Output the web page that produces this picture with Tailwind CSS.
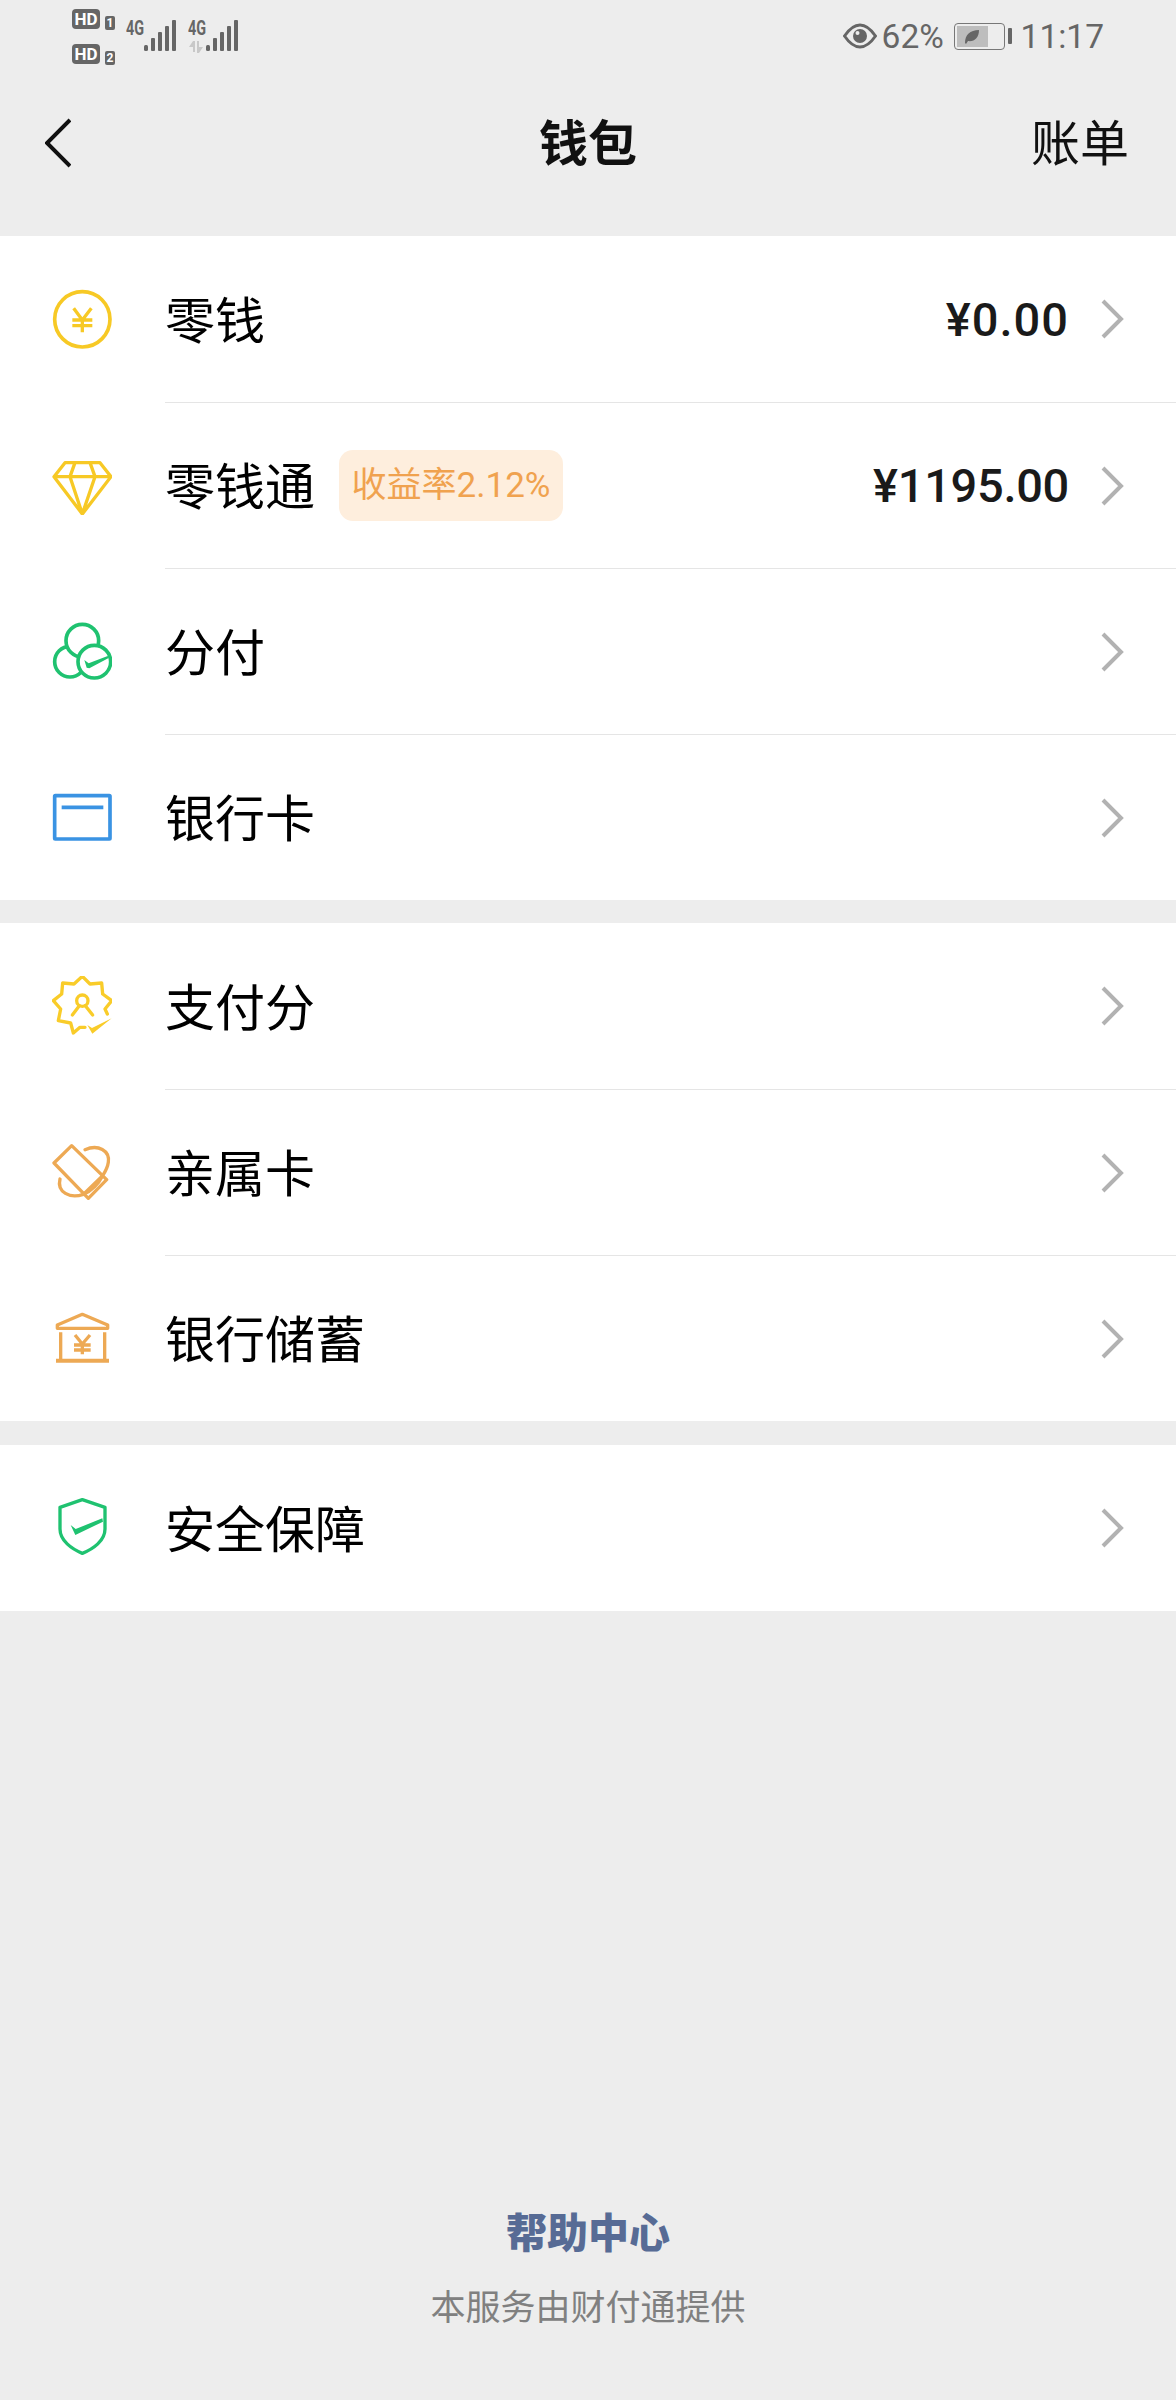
<!DOCTYPE html>
<html lang="zh-CN">
<head>
    <meta charset="UTF-8">
    <meta name="viewport" content="width=device-width, initial-scale=1.0">
    <title>钱包</title>
    <script src="https://cdn.jsdelivr.net/npm/@tailwindcss/browser@4"></script>
</head>
<body class="bg-[#ededed] font-[family-name:Roboto,'Noto_Sans_CJK_SC',sans-serif]">
<div class="w-[1176px] h-[2400px] flex flex-col">

    <!-- status bar + title -->
    <header class="h-[236px] shrink-0">
        <div class="h-[72px] flex items-start justify-between pl-[72px] pr-[72px] text-[#666]">
            <div class="flex items-start pt-[9px]">
                <div class="w-[44px] flex flex-col gap-[14px]">
                    <div class="flex items-start gap-[5px]">
                        <span class="w-[28px] h-[20px] rounded-[4px] bg-[#666] text-white text-[17px] leading-[20px] font-bold text-center">HD</span>
                        <span class="mt-[7px] w-[10px] h-[14px] rounded-[2px] bg-[#666] text-white text-[12px] leading-[14px] font-bold text-center">1</span>
                    </div>
                    <div class="flex items-start gap-[5px]">
                        <span class="w-[28px] h-[20px] rounded-[4px] bg-[#666] text-white text-[17px] leading-[20px] font-bold text-center">HD</span>
                        <span class="mt-[7px] w-[10px] h-[14px] rounded-[2px] bg-[#666] text-white text-[12px] leading-[14px] font-bold text-center">2</span>
                    </div>
                </div>
                <div class="ml-[10px] flex items-start">
                    <span class="w-[18px] mt-[10px] text-[20px] leading-[18px] font-bold origin-left scale-x-[0.72] whitespace-nowrap">4G</span>
                    <svg class="mt-[11px]" width="33" height="31" viewBox="0 0 33 31" fill="#666">
                        <rect x="0" y="25" width="4" height="6" rx="1.5"/><rect x="7" y="18" width="4" height="13" rx="1"/><rect x="14" y="12" width="4" height="19" rx="1"/><rect x="21" y="6" width="4" height="25" rx="1"/><rect x="28" y="0" width="4" height="31" rx="1"/>
                    </svg>
                </div>
                <div class="ml-[11px] flex items-start">
                    <div class="w-[18px] mt-[10px] flex flex-col">
                        <span class="text-[20px] leading-[18px] font-bold origin-left scale-x-[0.72] whitespace-nowrap">4G</span>
                        <svg class="mt-[4px]" width="16" height="12" viewBox="0 0 16 12" fill="#c8c8c8">
                            <path d="M1 6 L5 0 H7 V11 H5 V6 Z"/><path d="M9 0 H11 V6 L15 6 L11 12 H9 Z"/>
                        </svg>
                    </div>
                    <svg class="mt-[11px]" width="33" height="31" viewBox="0 0 33 31" fill="#666">
                        <rect x="0" y="25" width="4" height="6" rx="1.5"/><rect x="7" y="18" width="4" height="13" rx="1"/><rect x="14" y="12" width="4" height="19" rx="1"/><rect x="21" y="6" width="4" height="25" rx="1"/><rect x="28" y="0" width="4" height="31" rx="1"/>
                    </svg>
                </div>
            </div>
            <div class="flex items-center h-[72px] text-[33.5px] font-normal">
                <svg width="34" height="26" viewBox="0 0 34 26" fill="none" stroke="#666" stroke-width="3">
                    <path d="M1.5 13 C7 5 12 2 17 2 C22 2 27 5 32.5 13 C27 21 22 24 17 24 C12 24 7 21 1.5 13 Z"/>
                    <circle cx="17" cy="13" r="7" fill="#666" stroke="none"/>
                    <circle cx="14.5" cy="10" r="2" fill="#ededed" stroke="none"/>
                </svg>
                <span class="ml-[5px] w-[62px] pt-[2px]">62%</span>
                <div class="ml-[10px] relative w-[51px] h-[27px] rounded-[4px] border-[1.5px] border-[#777] p-[2px]">
                    <div class="w-[31px] h-full bg-[#bdbdbd] flex items-center justify-center">
                        <svg width="16" height="15" viewBox="0 0 16 15" fill="#666"><path d="M1 14 C1 6 6 1 15 1 C15 9 10 13 4 12 L2 15 Z"/></svg>
                    </div>
                </div>
                <div class="ml-[3px] w-[4px] h-[16px] rounded-[1px] bg-[#666]"></div>
                <span class="ml-[9px] pt-[2px]">11:17</span>
            </div>
        </div>
        <div class="grid grid-cols-[1fr_auto_1fr] items-center h-[142px] text-[49px] leading-none text-[#111]">
            <div class="pl-[45px]">
                <svg width="26" height="50" viewBox="0 0 26 50" fill="none" stroke="#111" stroke-width="4"><path d="M25 2 L2 25 L25 48"/></svg>
            </div>
            <div class="font-bold pt-[2px]">钱包</div>
            <div class="text-right pr-[47px] pt-[2px]">账单</div>
        </div>
    </header>

    <!-- section 1 -->
    <section class="bg-white">
        <div class="h-[166px] flex items-center pl-[52px] pr-[52px]">
            <svg class="shrink-0" width="60" height="60" viewBox="66 87 180 180" fill="none" stroke="#f7c925" stroke-width="11">
                <circle cx="157" cy="178" r="83"/>
                <path stroke-width="10" d="M131 145 L157 180 L184 145 M127 180 H187 M127 197 H187 M157 180 V217"/>
            </svg>
            <div class="ml-[53px] flex-1 h-full flex items-center -mr-[52px] pr-[52px]">
                <span class="pt-[6px] text-[50px] text-black">零钱</span>
                <span class="ml-auto pt-[2px] text-[47px] font-medium tracking-[1px] text-[#1a1a1a]">¥0.00</span>
                <svg class="ml-[31px]" width="24" height="40" viewBox="0 0 24 40" fill="none" stroke="#b2b2b2" stroke-width="4"><path d="M3 2 L21 20 L3 38"/></svg>
            </div>
        </div>
        <div class="h-[166px] flex items-center pl-[52px] pr-[52px]">
            <svg class="shrink-0" width="60" height="60" viewBox="66 585 180 180" fill="none" stroke="#f7c925" stroke-width="10" stroke-linejoin="round">
                <path d="M105 608 H210 L243 650 L157 762 L72 650 Z M72 650 H243 M135 608 L120 650 L157 762 L195 650 L180 608"/>
            </svg>
            <div class="ml-[53px] flex-1 h-full border-t border-[#e5e5e5] flex items-center -mr-[52px] pr-[52px]">
                <span class="pt-[6px] text-[50px] text-black">零钱通</span>
                <span class="ml-[24px] w-[224px] h-[71px] rounded-[14px] bg-[#feeedd] text-[#f0a24f] text-[35px] leading-[71px] text-center">收益率2.12%</span>
                <span class="ml-auto pt-[2px] text-[47px] font-medium tracking-[-0.3px] text-[#1a1a1a]">¥1195.00</span>
                <svg class="ml-[31px]" width="24" height="40" viewBox="0 0 24 40" fill="none" stroke="#b2b2b2" stroke-width="4"><path d="M3 2 L21 20 L3 38"/></svg>
            </div>
        </div>
        <div class="h-[166px] flex items-center pl-[52px] pr-[52px]">
            <svg class="shrink-0" width="60" height="60" viewBox="66 63 180 180" fill="none" stroke="#1fc270" stroke-width="11">
                <circle cx="120" cy="185" r="46"/>
                <circle cx="157" cy="122" r="49" fill="#fff"/>
                <circle cx="193" cy="185" r="49" fill="#fff"/>
                <path fill="#1fc270" stroke="none" d="M163 180 L176 190 L233 168 L236 174 L178 205 L170 203 Z"/>
            </svg>
            <div class="ml-[53px] flex-1 h-full border-t border-[#e5e5e5] flex items-center -mr-[52px] pr-[52px]">
                <span class="pt-[6px] text-[50px] text-black">分付</span>
                <svg class="ml-auto" width="24" height="40" viewBox="0 0 24 40" fill="none" stroke="#b2b2b2" stroke-width="4"><path d="M3 2 L21 20 L3 38"/></svg>
            </div>
        </div>
        <div class="h-[166px] flex items-center pl-[52px] pr-[52px]">
            <svg class="shrink-0" width="60" height="60" viewBox="66 561 180 180" fill="none" stroke="#3a93e3" stroke-width="11" stroke-linejoin="round">
                <rect x="74" y="587" width="166" height="130" rx="2"/>
                <path d="M95 622 H220"/>
            </svg>
            <div class="ml-[53px] flex-1 h-full border-t border-[#e5e5e5] flex items-center -mr-[52px] pr-[52px]">
                <span class="pt-[6px] text-[50px] text-black">银行卡</span>
                <svg class="ml-auto" width="24" height="40" viewBox="0 0 24 40" fill="none" stroke="#b2b2b2" stroke-width="4"><path d="M3 2 L21 20 L3 38"/></svg>
            </div>
        </div>
    </section>

    <!-- section 2 -->
    <section class="bg-white mt-[23px]">
        <div class="h-[166px] flex items-center pl-[52px] pr-[52px]">
            <svg class="shrink-0" width="60" height="60" viewBox="66 51 180 180" fill="none" stroke="#f9cc29" stroke-width="10" stroke-linejoin="round" stroke-linecap="round">
                <path d="M232 165 L225 150 L245 125 L218 105 L215 72 L180 75 L157 52 L132 75 L98 72 L95 105 L70 125 L92 150 L85 185 L122 192 L130 222 L150 205 L165 205"/>
                <circle cx="157" cy="125" r="17"/>
                <path d="M127 168 L148 140 M188 168 L166 140"/>
                <path fill="#f9cc29" stroke="none" d="M172 198 L186 207 L245 178 L187 224 Z"/>
            </svg>
            <div class="ml-[53px] flex-1 h-full flex items-center -mr-[52px] pr-[52px]">
                <span class="pt-[6px] text-[50px] text-black">支付分</span>
                <svg class="ml-auto" width="24" height="40" viewBox="0 0 24 40" fill="none" stroke="#b2b2b2" stroke-width="4"><path d="M3 2 L21 20 L3 38"/></svg>
            </div>
        </div>
        <div class="h-[166px] flex items-center pl-[52px] pr-[52px]">
            <svg class="shrink-0" width="60" height="60" viewBox="66 549 180 180" fill="none" stroke="#eda954" stroke-width="10" stroke-linejoin="round" stroke-linecap="round">
                <path d="M125 560 L230 662 L175 718 L72 612 Z M218 650 L160 706"/>
                <path d="M165 572 C205 555 240 575 235 610 C233 625 228 635 218 650 M90 660 C80 700 120 720 160 706 C185 695 205 675 218 650"/>
            </svg>
            <div class="ml-[53px] flex-1 h-full border-t border-[#e5e5e5] flex items-center -mr-[52px] pr-[52px]">
                <span class="pt-[6px] text-[50px] text-black">亲属卡</span>
                <svg class="ml-auto" width="24" height="40" viewBox="0 0 24 40" fill="none" stroke="#b2b2b2" stroke-width="4"><path d="M3 2 L21 20 L3 38"/></svg>
            </div>
        </div>
        <div class="h-[166px] flex items-center pl-[52px] pr-[52px]">
            <svg class="shrink-0" width="60" height="60" viewBox="66 27 180 180" fill="none" stroke="#eda954" stroke-width="10">
                <path stroke-linejoin="round" d="M82 88 V78 L157 46 L233 78 V88 Z"/>
                <path d="M92 100 V185 M224 100 V185"/>
                <path stroke-width="12" d="M78 185 H237"/>
                <path d="M135 108 L157 135 L180 108 M132 138 H182 M132 153 H182 M157 135 V166"/>
            </svg>
            <div class="ml-[53px] flex-1 h-full border-t border-[#e5e5e5] flex items-center -mr-[52px] pr-[52px]">
                <span class="pt-[6px] text-[50px] text-black">银行储蓄</span>
                <svg class="ml-auto" width="24" height="40" viewBox="0 0 24 40" fill="none" stroke="#b2b2b2" stroke-width="4"><path d="M3 2 L21 20 L3 38"/></svg>
            </div>
        </div>
    </section>

    <!-- section 3 -->
    <section class="bg-white mt-[24px]">
        <div class="h-[166px] flex items-center pl-[52px] pr-[52px]">
            <svg class="shrink-0" width="60" height="60" viewBox="66 597 180 180" fill="none" stroke="#1fc270" stroke-width="10" stroke-linejoin="round">
                <path d="M157 602 L225 625 V690 C225 725 190 750 157 763 C125 750 90 725 90 690 V625 Z"/>
                <path fill="#1fc270" stroke="none" d="M122 678 L137 690 L217 658 L219 668 L136 708 Z"/>
            </svg>
            <div class="ml-[53px] flex-1 h-full flex items-center -mr-[52px] pr-[52px]">
                <span class="pt-[6px] text-[50px] text-black">安全保障</span>
                <svg class="ml-auto" width="24" height="40" viewBox="0 0 24 40" fill="none" stroke="#b2b2b2" stroke-width="4"><path d="M3 2 L21 20 L3 38"/></svg>
            </div>
        </div>
    </section>

    <footer class="mt-auto pb-[69px] flex flex-col items-center">
        <div class="text-[41px] leading-[48px] font-black text-[#576b95]">帮助中心</div>
        <div class="mt-[29px] text-[35px] leading-[44px] text-[#808080]">本服务由财付通提供</div>
    </footer>
</div>
</body>
</html>
